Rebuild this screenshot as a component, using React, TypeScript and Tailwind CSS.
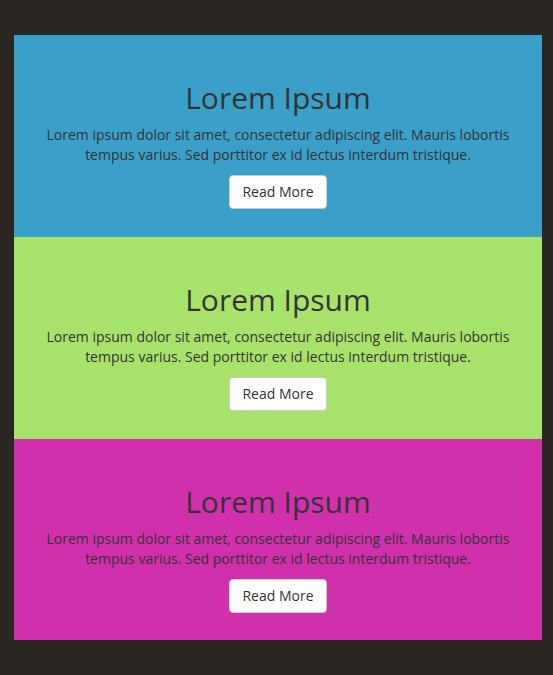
import React from "react";

const panels = [
  { id: "one", bg: "bg-[#3ba0c9]", pb: "pb-[28px]" },
  { id: "two", bg: "bg-[#a7e36b]", pb: "pb-[28px]" },
  { id: "three", bg: "bg-[#d130ac]", pb: "pb-[27px]" },
];

function Panel({ bg, pb }: { bg: string; pb: string }) {
  return (
    <section className={`${bg} ${pb} px-[15px] pt-[45px] text-center text-[#333333]`}>
      <h1 className="text-[30px] leading-[35px] font-normal">Lorem Ipsum</h1>
      <p className="mt-[10px] text-[14px] leading-[20px]">
        Lorem ipsum dolor sit amet, consectetur adipiscing elit. Mauris lobortis tempus varius. Sed
        porttitor ex id lectus interdum tristique.
      </p>
      <button className="mt-[10px] h-[34px] rounded-[4px] border border-[#cccccc] bg-white px-[12px] text-[14px] leading-[20px] text-[#333333]">
        Read More
      </button>
    </section>
  );
}

export default function App() {
  return (
    <main
      className="min-h-[675px] bg-[#2a2723] px-[14px] pt-[35px] pb-[35px] w-[553px]"
      style={{ fontFamily: '"Open Sans", sans-serif' }}
    >
      <div className="w-[528px]">
        {panels.map((p) => (
          <Panel key={p.id} bg={p.bg} pb={p.pb} />
        ))}
      </div>
    </main>
  );
}
